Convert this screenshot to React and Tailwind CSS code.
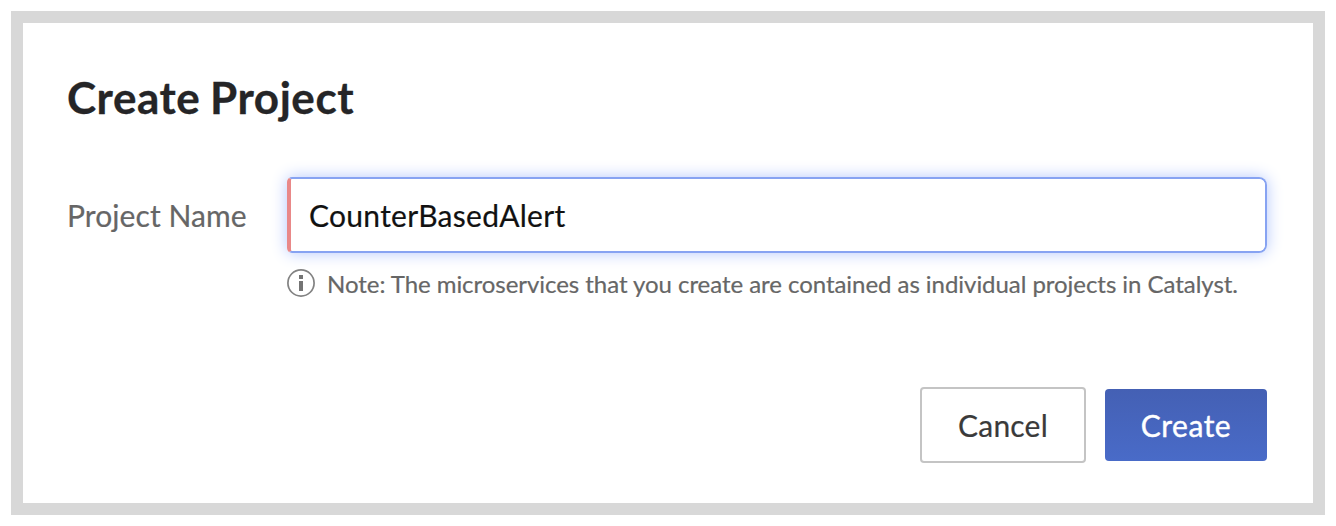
import React, { useState } from 'react';

const InfoIcon = () => (
  <svg width="28" height="28" viewBox="0 0 28 28" fill="none" className="mb-0.5 shrink-0">
    <circle cx="14" cy="14" r="13.1" stroke="#828282" strokeWidth="1.7" />
    <rect x="12" y="6" width="4" height="4" fill="#747474" />
    <rect x="12" y="12" width="4" height="10" fill="#747474" />
  </svg>
);

const App = () => {
  const [name, setName] = useState('CounterBasedAlert');

  return (
    <div className="h-[526px] w-[1336px] bg-white p-[11px] font-['Lato',sans-serif]">
      <form
        onSubmit={(e) => e.preventDefault()}
        className="flex h-[504px] w-[1314px] flex-col border-[12px] border-[#d8d8d8] bg-white pl-11 pr-[46px] pt-[47px]"
      >
        <h2 className="text-[44px] font-bold leading-[54px] tracking-[0.55px] text-[#252527] [word-spacing:-1.5px] [-webkit-text-stroke:0.3px_#252527]">Create Project</h2>

        {/* Project name */}
        <div className="mt-[53px] flex items-center">
          <label htmlFor="name" className="w-[220px] text-[30px] tracking-[0.08px] text-[#666] [-webkit-text-stroke:0.2px_#666]">Project Name</label>
          <div className="flex h-[76px] flex-1 overflow-hidden rounded-l-[5px] rounded-r-lg border-2 border-l-4 border-[#87a3f2] border-l-[#e98888] shadow-[0_0_16px_#b4c7fc]">
            <input
              id="name"
              type="text"
              value={name}
              onChange={(e) => setName(e.target.value)}
              className="w-full bg-white pl-[18px] text-[30px] tracking-[0.28px] text-[#111] outline-none [-webkit-text-stroke:0.2px_#111]"
            />
          </div>
        </div>

        {/* Note */}
        <div className="ml-[220px] mt-4 flex items-center gap-3">
          <InfoIcon />
          <p className="whitespace-nowrap text-[24px] leading-[30px] tracking-[-0.045px] text-[#666] [-webkit-text-stroke:0.2px_#666]">
            Note: The microservices that you create are contained as individual projects in Catalyst.
          </p>
        </div>

        {/* Actions */}
        <div className="mt-[88px] flex items-center justify-end gap-[19px]">
          <button type="button" className="h-[76px] w-[166px] rounded border-2 border-[#c4c4c4] bg-white text-[30px] tracking-[0.2px] text-[#3a3a3a] [-webkit-text-stroke:0.2px_#3a3a3a]">
            Cancel
          </button>
          <button type="submit" className="h-[72px] w-[162px] rounded bg-linear-to-b from-[#4460b4] to-[#496bc8] text-[30px] tracking-[0.5px] text-white [-webkit-text-stroke:0.4px_#fff]">
            Create
          </button>
        </div>
      </form>
    </div>
  );
};

export default App;
